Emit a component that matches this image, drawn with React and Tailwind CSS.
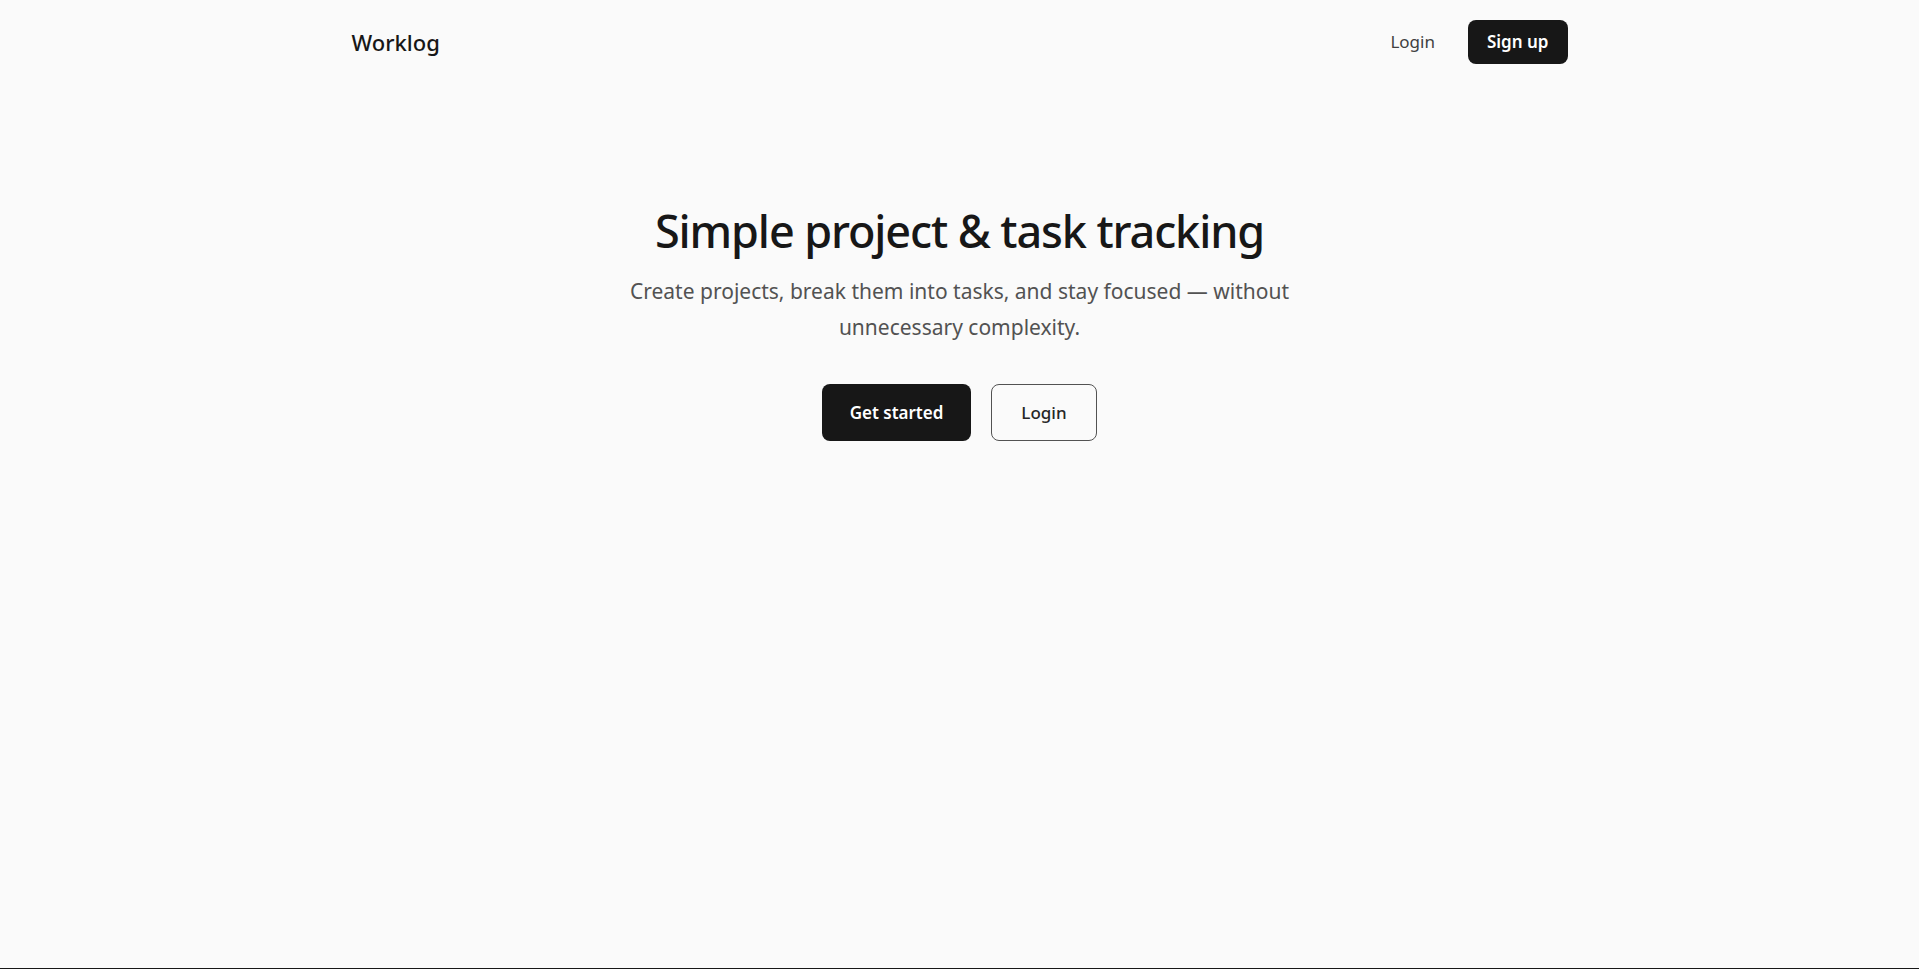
const font = { fontFamily: '"Noto Sans", "Open Sans", sans-serif' };

const Navbar = () => (
  <header className="mx-auto w-full max-w-7xl px-8">
    <nav className="flex h-[84px] items-center justify-between">
      <a href="#" className="text-[22px] font-medium text-neutral-900">
        Worklog
      </a>
      <div className="flex items-center gap-[25px]">
        <a href="#" className="px-2 text-[17px] text-neutral-700">
          Login
        </a>
        <a
          href="#"
          className="flex h-11 items-center rounded-lg bg-neutral-900 px-[19px] text-[17px] font-semibold text-white"
        >
          Sign up
        </a>
      </div>
    </nav>
  </header>
);

const Hero = () => (
  <section className="flex flex-col items-center px-6 pt-[124px] text-center">
    <h1 className="text-[45px] leading-none font-medium tracking-tight text-neutral-900">
      Simple project &amp; task tracking
    </h1>
    <p className="mt-5 max-w-[700px] text-[21px] leading-[36px] text-neutral-600">
      Create projects, break them into tasks, and stay focused — without
      unnecessary complexity.
    </p>
    <div className="mt-[39px] flex items-center gap-5">
      <a
        href="#"
        className="flex h-[57px] w-[149px] items-center justify-center rounded-lg bg-neutral-900 text-[17px] font-semibold text-white"
      >
        Get started
      </a>
      <a
        href="#"
        className="flex h-[57px] w-[106px] items-center justify-center rounded-lg border border-neutral-600 text-[17px] font-medium text-neutral-800"
      >
        Login
      </a>
    </div>
  </section>
);

export default function App() {
  return (
    <div
      className="min-h-screen border-b border-neutral-900 bg-[#fafafa]"
      style={font}
    >
      <Navbar />
      <Hero />
    </div>
  );
}
